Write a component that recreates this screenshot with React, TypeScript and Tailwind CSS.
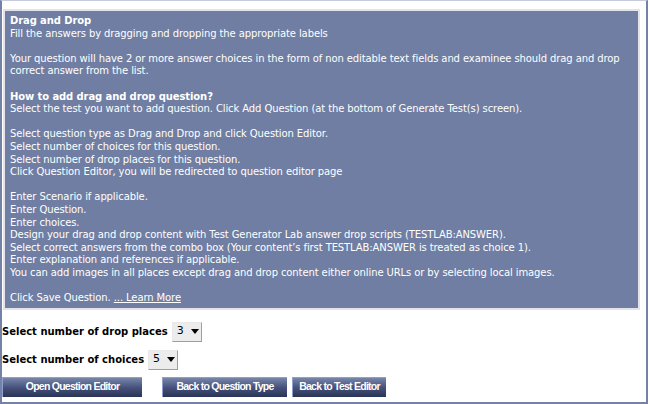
import React from 'react';

const body = "font-['DejaVu_Sans',Tahoma,sans-serif]";

const FakeSelect = ({ value }: { value: string }) => (
  <div className="flex h-[20px] w-[30px] items-stretch border border-[#a0a0a0] border-l-[#e8e8e8] border-t-[#e8e8e8] bg-[#ececec]">
    <span className={`${body} flex flex-1 items-center pl-[4px] text-[11px] text-black`}>{value}</span>
    <span className="flex w-[12px] items-center justify-center">
      <svg width="8" height="5" viewBox="0 0 8 5">
        <path d="M0 0h8L4 5z" fill="#000" />
      </svg>
    </span>
  </div>
);

const NavButton = ({ label, width }: { label: string; width: string }) => (
  <button
    className={`${width} h-[20px] whitespace-nowrap border-l border-t border-[#8fa0d0] bg-gradient-to-b from-[#7886aa] via-[#46527c] to-[#2a3456] font-['Liberation_Sans',Arial,sans-serif] text-[10.5px] font-bold tracking-[-0.75px] text-white`}
  >
    {label}
  </button>
);

export default function App() {
  const steps = [
    'Select question type as Drag and Drop and click Question Editor.',
    'Select number of choices for this question.',
    'Select number of drop places for this question.',
    'Click Question Editor, you will be redirected to question editor page',
  ];

  return (
    <div className="h-[404px] w-[648px] border-x-2 border-b-2 border-t border-[#7482a8] border-t-[#c5cbdb] bg-white">
      {/* Help panel */}
      <div className="ml-[1px] mr-[6px] mt-[8px] border-2 border-[#e2e4ea]">
        <div className={`${body} bg-[#6f7ea2] px-[5px] pb-[3px] pt-[4px] text-[10px] leading-[12.6px] tracking-[-0.1px] text-white`}>
          <div className="font-bold">Drag and Drop</div>
          <div>Fill the answers by dragging and dropping the appropriate labels</div>
          <br />
          <div>
            Your question will have 2 or more answer choices in the form of non editable text fields and examinee should drag and drop correct answer from the list.
          </div>
          <br />
          <div className="font-bold">How to add drag and drop question?</div>
          <div>Select the test you want to add question. Click Add Question (at the bottom of Generate Test(s) screen).</div>
          <br />
          {steps.map((l, i) => (
            <div key={i}>{l}</div>
          ))}
          <br />
          <div>Enter Scenario if applicable.</div>
          <div>Enter Question.</div>
          <div>Enter choices.</div>
          <div>Design your drag and drop content with Test Generator Lab answer drop scripts (TESTLAB:ANSWER).</div>
          <div>Select correct answers from the combo box (Your content’s first TESTLAB:ANSWER is treated as choice 1).</div>
          <div>Enter explanation and references if applicable.</div>
          <div>You can add images in all places except drag and drop content either online URLs or by selecting local images.</div>
          <br />
          <div>
            Click Save Question. <span className="underline">... Learn More</span>
          </div>
        </div>
      </div>

      {/* Options */}
      <div className="mt-[12px] flex flex-col">
        <div className="flex items-center gap-[4px]">
          <span className={`${body} text-[10px] font-bold text-black`}>Select number of drop places</span>
          <FakeSelect value="3" />
        </div>
        <div className="mt-[8px] flex items-center gap-[4px]">
          <span className={`${body} text-[10px] font-bold text-black`}>Select number of choices</span>
          <FakeSelect value="5" />
        </div>
        <div className="mt-[7px] flex items-center">
          <NavButton label="Open Question Editor" width="w-[140px]" />
          <div className="ml-[20px] flex gap-[5px]">
            <NavButton label="Back to Question Type" width="w-[125px]" />
            <NavButton label="Back to Test Editor" width="w-[94px]" />
          </div>
        </div>
      </div>
    </div>
  );
}
